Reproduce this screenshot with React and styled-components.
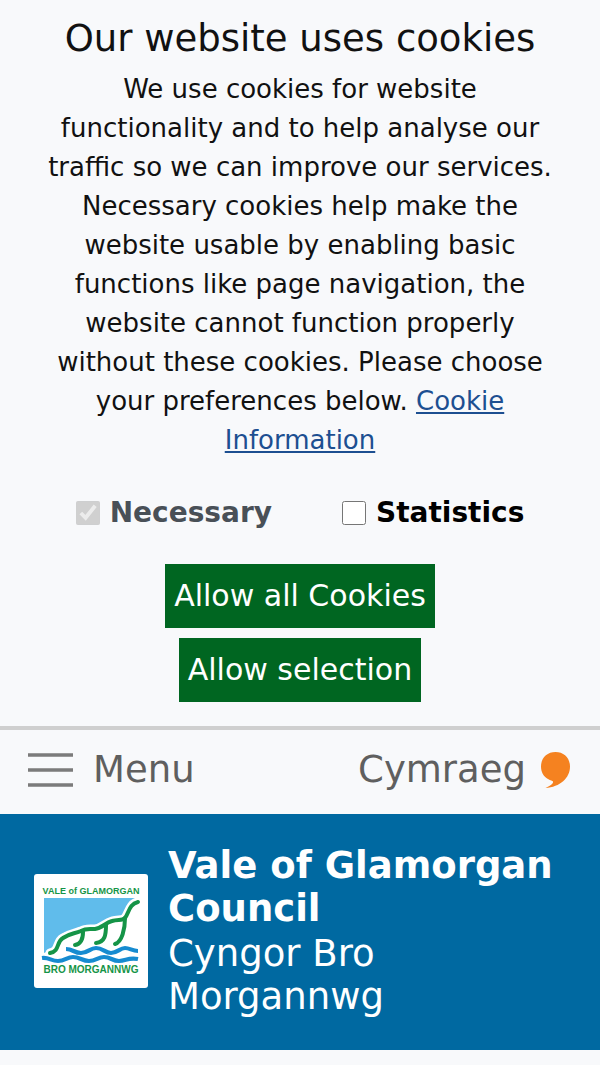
import styled, { createGlobalStyle } from 'styled-components';

const GlobalStyle = createGlobalStyle`
  * {
    box-sizing: border-box;
  }
  body {
    margin: 0;
    background: #f8f9fb;
    color: #111;
    font-family: 'DejaVu Sans', Verdana, sans-serif;
    font-size: 26px;
    line-height: 39px;
  }
`;
const CookieBanner = styled.section`
  display: flex;
  flex-direction: column;
  align-items: center;
  padding: 16px 32px 24px;
  border-bottom: 4px solid #cfcfcf;
  text-align: center;
`;
const BannerTitle = styled.h2`
  margin: 0 0 8px;
  font-size: 37px;
  font-weight: 400;
  line-height: 46px;
`;
const BannerText = styled.p`
  margin: 0;
  max-width: 520px;
`;
const TextLink = styled.a`
  color: #1d4f91;
  text-decoration: underline;
`;
const Options = styled.div`
  display: flex;
  align-items: center;
  justify-content: center;
  gap: 70px;
  margin: 33px 0 32px;
`;
const Option = styled.label`
  display: flex;
  align-items: center;
  gap: 10px;
  color: ${({ $muted }) => ($muted ? '#495057' : '#000')};
  font-size: 28px;
  font-weight: 700;
`;
const Checkbox = styled.input`
  width: 24px;
  height: 24px;
  margin: 0;
`;
const Actions = styled.div`
  display: flex;
  flex-direction: column;
  align-items: center;
  gap: 10px;
`;
const Button = styled.button`
  padding: 10px 9px;
  border: 0;
  background: #006621;
  color: #fff;
  font-family: inherit;
  font-size: 30px;
  line-height: 44px;
  cursor: pointer;
`;
const NavBar = styled.nav`
  display: flex;
  align-items: center;
  justify-content: space-between;
  padding: 16px 28px 20px;
`;
const MenuButton = styled.button`
  display: flex;
  align-items: center;
  gap: 20px;
  padding: 0;
  border: 0;
  background: none;
  color: #5f5f5f;
  font-family: inherit;
  font-size: 37px;
  line-height: 48px;
  cursor: pointer;
`;
const LanguageLink = styled.a`
  display: flex;
  align-items: center;
  gap: 14px;
  color: #5f5f5f;
  font-size: 37px;
  line-height: 48px;
  text-decoration: none;
`;
const Header = styled.header`
  display: flex;
  align-items: center;
  gap: 20px;
  padding: 30px 34px 32px;
  background: #0069a1;
  color: #fff;
`;
const LogoLink = styled.a`
  display: flex;
  flex-shrink: 0;
`;
const CouncilNames = styled.div`
  display: flex;
  flex-direction: column;
  gap: 2px;
  font-size: 37px;
  line-height: 43px;
`;
const CouncilName = styled.h1`
  margin: 0;
  font-size: inherit;
  font-weight: 700;
`;
const WelshName = styled.p`
  margin: 0;
`;

function MenuIcon() {
  return (
    <svg width="45" height="36" viewBox="0 0 45 36" aria-hidden="true">
      <path d="M0 3h45M0 18h45M0 33h45" stroke="#7b7b7b" strokeWidth="3.6" />
    </svg>
  );
}

function CommaIcon() {
  return (
    <svg width="32" height="38" viewBox="0 0 32 38" aria-hidden="true">
      <path
        d="M15.500 1C24 1 30 7 30 15.500C30 27 20 36 5.500 37C10 34.500 13.500 32.500 13 30.500C12.500 29.500 10.500 29.500 8 28C3.500 25.500 1 21 1 15.500C1 7 7 1 15.500 1Z"
        fill="#f58220"
      />
    </svg>
  );
}

const cliffs = [
  'M16 79C26 77 22 68 29 64C36 59 40 60 47 57C52 54 55 55 61 55C68 54 71 49 78 47C84 45 88 47 91 44C95 39 95 30 104 28',
  'M49 58C49 65 47 70 41 71',
  'M72 51C72 61 71 68 62 69',
  'M91 44C91 55 88 68 81 70',
];

function CouncilLogo() {
  return (
    <svg width="114" height="114" viewBox="0 0 114 114" role="img" aria-label="Vale of Glamorgan Council">
      <rect width="114" height="114" rx="3" fill="#fff" />
      <path d="M10 24H102C94 29 93 39 89 43C79 43 75 47 69 51C61 53 53 51 46 55C36 58 28 57 25 64C22 72 19 76 10 79Z" fill="#60bceb" />
      <g fill="none" strokeLinecap="round">
        {cliffs.map((d) => (
          <path key={d} d={d} stroke="#fff" strokeWidth="9" />
        ))}
        {cliffs.map((d) => (
          <path key={d} d={d} stroke="#159447" strokeWidth="4" />
        ))}
      </g>
      <g fill="none" stroke="#168bd0" strokeWidth="4.2">
        <path d="M32 75C39 75 40 79 47 79C54 79 56 74 62 74C69 74 71 79 77 79C83 79 86 74 91 74C96 74 98 77 104 77" />
        <path d="M8 84C15 83 17 87 24 87C31 87 33 83 39 83C46 83 48 87 55 87C62 87 64 83 70 83C77 83 78 87 85 87C92 87 94 83 104 85" />
      </g>
      <g
        fill="#159447"
        fontFamily="'Liberation Sans Narrow', 'Liberation Sans', sans-serif"
        fontWeight="700"
        textAnchor="middle"
      >
        <text x="57" y="20" fontSize="9">VALE of GLAMORGAN</text>
        <text x="57" y="99" fontSize="10">BRO MORGANNWG</text>
      </g>
    </svg>
  );
}

export default function App() {
  return (
    <>
      <GlobalStyle />
      <CookieBanner>
        <BannerTitle>Our website uses cookies</BannerTitle>
        <BannerText>
          We use cookies for website functionality and to help analyse our traffic so we can
          improve our services. Necessary cookies help make the website usable by enabling basic
          functions like page navigation, the website cannot function properly without these
          cookies. Please choose your preferences below.{' '}
          <TextLink href="#cookies">Cookie Information</TextLink>
        </BannerText>
        <Options>
          <Option htmlFor="necessary" $muted>
            <Checkbox id="necessary" type="checkbox" defaultChecked disabled />
            Necessary
          </Option>
          <Option htmlFor="statistics">
            <Checkbox id="statistics" type="checkbox" />
            Statistics
          </Option>
        </Options>
        <Actions>
          <Button type="button">Allow all Cookies</Button>
          <Button type="button">Allow selection</Button>
        </Actions>
      </CookieBanner>
      <NavBar>
        <MenuButton type="button">
          <MenuIcon />
          Menu
        </MenuButton>
        <LanguageLink href="#cymraeg">
          Cymraeg
          <CommaIcon />
        </LanguageLink>
      </NavBar>
      <Header>
        <LogoLink href="#home">
          <CouncilLogo />
        </LogoLink>
        <CouncilNames>
          <CouncilName>Vale of Glamorgan Council</CouncilName>
          <WelshName>Cyngor Bro Morgannwg</WelshName>
        </CouncilNames>
      </Header>
    </>
  );
}
